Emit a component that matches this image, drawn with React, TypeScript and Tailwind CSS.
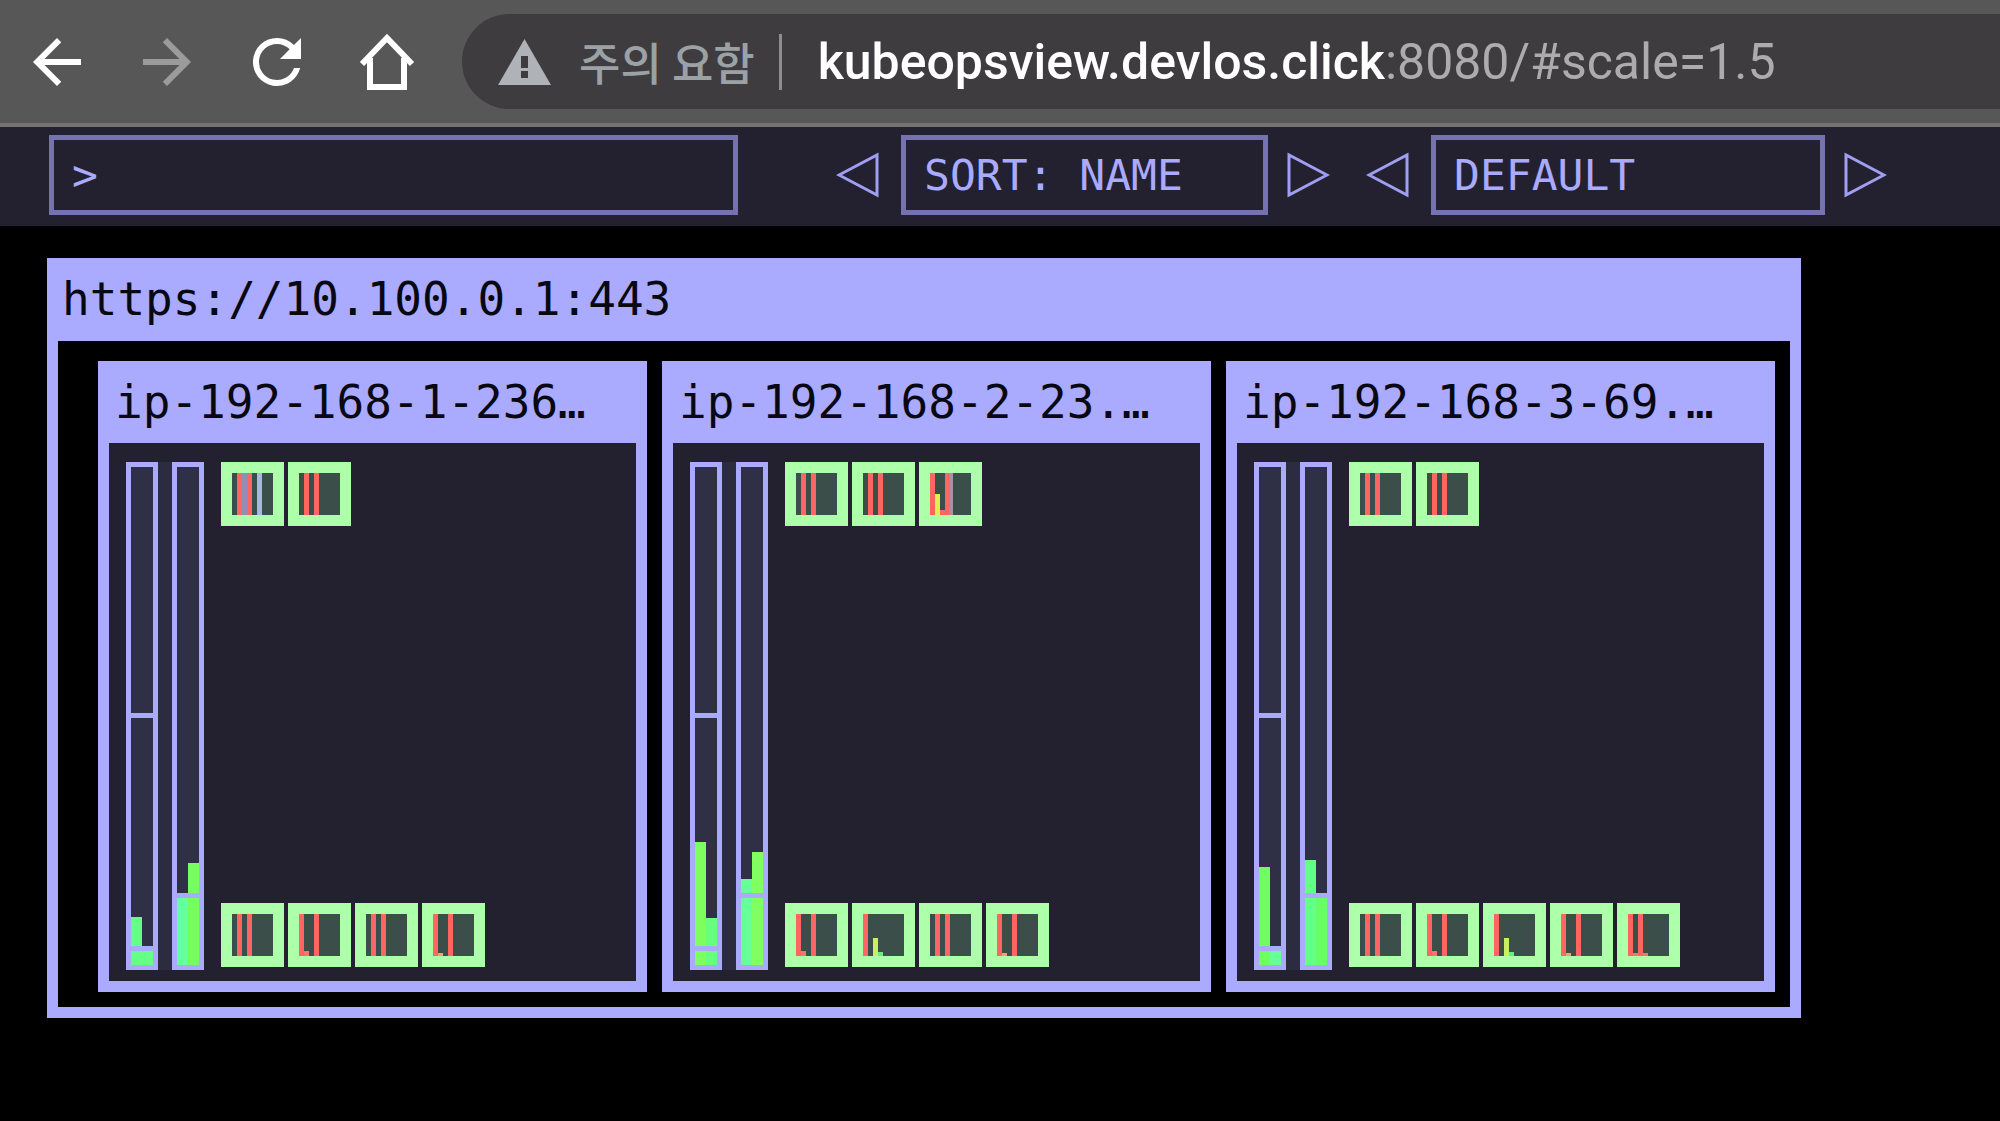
import type { ReactNode } from "react";

interface Stripe {
  col: number;
  height: number;
  color: string;
  width?: number;
}

interface GaugeData {
  label: string;
  columns: { top: number; color: string }[];
  marks: number[];
}

interface NodeData {
  name: string;
  gauges: GaugeData[];
  pods: Stripe[][];
  systemPods: Stripe[][];
}

const RED = "#ff6663";
const GAUGE_HEIGHT = 508;
const POD_INNER = 42;

const full = (col: number): Stripe => ({ col, height: POD_INNER, color: RED });

const IDLE: Stripe[] = [full(1), full(3)];
const LOW: Stripe[] = [full(0), { col: 1, height: 5, color: "#ff7468" }, full(3)];
const LOWER: Stripe[] = [full(0), { col: 1, height: 3, color: "#f8a070" }, full(3)];
const MEMORY: Stripe[] = [
  full(0),
  { col: 2, height: 18, color: "#c8f060" },
  { col: 3, height: 4, color: "#66ee80" },
];
const BUSY: Stripe[] = [
  full(1),
  { col: 2, height: POD_INNER, color: "#938fb4" },
  full(3),
  { col: 5, height: POD_INNER, color: "#a5b8e6" },
];
const MIXED: Stripe[] = [
  full(0),
  { col: 1, height: 21, color: "#e2f04e" },
  { col: 2, height: 5, color: RED },
  full(3),
  { col: 4, height: POD_INNER, color: "#a98fa8", width: 3 },
];
const NARROW: Stripe[] = [
  full(0),
  { col: 1, height: 3, color: "#f07868" },
  full(2),
  { col: 3, height: 3, color: "#f07868" },
];

const NODES: NodeData[] = [
  {
    name: "ip-192-168-1-236…",
    gauges: [
      { label: "CPU", columns: [{ top: 455, color: "#66ff85" }, { top: 488, color: "#66ff85" }], marks: [251, 484] },
      { label: "Memory", columns: [{ top: 434, color: "#66ffa0" }, { top: 401, color: "#74ff5e" }], marks: [431] },
    ],
    pods: [BUSY, IDLE],
    systemPods: [IDLE, LOW, IDLE, LOWER],
  },
  {
    name: "ip-192-168-2-23.…",
    gauges: [
      { label: "CPU", columns: [{ top: 380, color: "#7dff60" }, { top: 456, color: "#66ff80" }], marks: [251, 484] },
      { label: "Memory", columns: [{ top: 417, color: "#66ff98" }, { top: 390, color: "#82ff60" }], marks: [431] },
    ],
    pods: [IDLE, IDLE, MIXED],
    systemPods: [LOW, MEMORY, IDLE, LOWER],
  },
  {
    name: "ip-192-168-3-69.…",
    gauges: [
      { label: "CPU", columns: [{ top: 405, color: "#70ff60" }, { top: 488, color: "#66ff98" }], marks: [251, 484] },
      { label: "Memory", columns: [{ top: 398, color: "#66ff85" }, { top: 434, color: "#66ff66" }], marks: [431] },
    ],
    pods: [IDLE, IDLE],
    systemPods: [IDLE, LOW, MEMORY, LOWER, NARROW],
  },
];

function NavButton({ label, disabled, children }: { label: string; disabled?: boolean; children: ReactNode }) {
  return (
    <button
      type="button"
      aria-label={label}
      disabled={disabled}
      className="size-[72px] shrink-0 text-white disabled:text-[#9b9b9b]"
    >
      <svg viewBox="0 0 72 72" className="size-full" fill="currentColor">
        {children}
      </svg>
    </button>
  );
}

function BrowserBar() {
  return (
    <header className="flex h-[127px] items-center border-b-4 border-[#777371] bg-[#575757] pl-[21px]">
      <nav className="flex shrink-0 items-center gap-[38px]">
        <NavButton label="Back">
          <path transform="scale(3)" d="M20 11H7.83l5.59-5.59L12 4l-8 8 8 8 1.41-1.41L7.83 13H20v-2z" />
        </NavButton>
        <NavButton label="Forward" disabled>
          <path transform="scale(3)" d="M12 4l-1.41 1.41L16.17 11H4v2h12.17l-5.58 5.59L12 20l8-8z" />
        </NavButton>
        <NavButton label="Reload">
          <path
            transform="scale(3)"
            d="M17.65 6.35A7.96 7.96 0 0 0 12 4a8 8 0 1 0 7.73 10h-2.08A6 6 0 1 1 12 6c1.66 0 3.14.69 4.22 1.78L13 11h7V4l-2.35 2.35z"
          />
        </NavButton>
        <NavButton label="Home">
          <path
            d="M11 38 36 12 61 38M19 32V61H53V32"
            fill="none"
            stroke="currentColor"
            strokeWidth="6"
          />
        </NavButton>
      </nav>
      <div className="ml-[39px] flex h-[95px] min-w-0 flex-1 items-center rounded-l-full bg-[#3f3c40] pl-9">
        <svg viewBox="0 0 53 46" className="h-[46px] w-[53px] shrink-0" fill="#afb3b7">
          <path fillRule="evenodd" d="M26.500 0 53 46H0zM23 17v12h7V17zM23 32v7h7v-7z" />
        </svg>
        <span className="ml-7 shrink-0 font-['Noto_Sans_CJK_KR',sans-serif] text-[45px] leading-[56px] font-medium text-[#9ba1a5]">
          주의 요함
        </span>
        <span className="ml-6 h-14 w-[3px] shrink-0 bg-[#8e8e90]" />
        <span className="ml-9 font-[Roboto,sans-serif] text-[50px] leading-[60px] whitespace-nowrap text-[#acacac]">
          <span className="font-medium text-white">kubeopsview.devlos.click</span>:8080/#scale=1.5
        </span>
      </div>
    </header>
  );
}

function ArrowButton({ label, flip }: { label: string; flip?: boolean }) {
  return (
    <button type="button" aria-label={label} className="h-12 w-11 shrink-0">
      <svg viewBox="0 0 44 48" className="size-full" fill="none" stroke="#a09ef0" strokeWidth="3">
        <path d={flip ? "M3 4V44L41 24z" : "M41 4V44L3 24z"} />
      </svg>
    </button>
  );
}

function Toolbar() {
  return (
    <div className="flex h-[99px] items-start bg-[#232130] pt-2 pl-[49px] text-[43px] leading-[70px] text-[#aaaaff]">
      <label className="flex h-20 w-[689px] border-5 border-[#7572b0] pl-[18px]">
        <span>&gt;</span>
        <input type="text" aria-label="Search" className="min-w-0 flex-1 outline-none" />
      </label>
      <div className="ml-[98px] flex h-20 items-center">
        <ArrowButton label="Previous sort order" />
        <output className="mr-[18px] ml-[21px] h-20 w-[367px] border-5 border-[#7572b0] pl-[18px] whitespace-pre">SORT: NAME</output>
        <ArrowButton label="Next sort order" flip />
      </div>
      <div className="ml-9 flex h-20 items-center">
        <ArrowButton label="Previous theme" />
        <output className="mr-[18px] ml-[21px] h-20 w-[394px] border-5 border-[#7572b0] pl-[18px]">DEFAULT</output>
        <ArrowButton label="Next theme" flip />
      </div>
    </div>
  );
}

function Gauge({ label, columns, marks }: GaugeData) {
  return (
    <svg role="img" aria-label={label} viewBox="0 0 32 508" className="h-[508px] w-8 bg-[#2f2f45]">
      {columns.map((c, i) => (
        <rect key={i} x={5 + i * 11} y={c.top} width={11} height={GAUGE_HEIGHT - c.top} fill={c.color} />
      ))}
      {marks.map((y) => (
        <rect key={y} x={5} y={y} width={22} height={5} fill="#aaaaff" />
      ))}
      <rect x={2.5} y={2.5} width={27} height={503} fill="none" stroke="#aaaaff" strokeWidth={5} />
    </svg>
  );
}

function Pod({ stripes }: { stripes: Stripe[] }) {
  return (
    <svg viewBox="0 0 63 64" className="h-16 w-[63px] shrink-0">
      <rect width={63} height={64} fill="#adffa9" />
      <rect x={11} y={11} width={41} height={POD_INNER} fill="#3c4e4a" />
      {stripes.map((s, i) => (
        <rect key={i} x={11 + s.col * 5} y={53 - s.height} width={s.width ?? 5} height={s.height} fill={s.color} />
      ))}
    </svg>
  );
}

function PodRow({ pods }: { pods: Stripe[][] }) {
  return (
    <div className="flex gap-1">
      {pods.map((stripes, i) => (
        <Pod key={i} stripes={stripes} />
      ))}
    </div>
  );
}

function NodeCard({ node }: { node: NodeData }) {
  return (
    <article className="w-[549px] bg-[#aaaaff] px-[11px] pb-[11px]">
      <h2 className="pl-[6px] leading-[82px]">{node.name}</h2>
      <div className="flex bg-[#232130] pt-[19px] pr-4 pb-[11px] pl-[17px]">
        <div className="flex gap-[14px] bg-[#2c2c40]">
          {node.gauges.map((g) => (
            <Gauge key={g.label} {...g} />
          ))}
        </div>
        <div className="ml-[17px] flex flex-col justify-between pb-[3px]">
          <PodRow pods={node.pods} />
          <PodRow pods={node.systemPods} />
        </div>
      </div>
    </article>
  );
}

export default function App() {
  return (
    <div className="min-h-screen overflow-hidden bg-black font-['DejaVu_Sans_Mono',monospace]">
      <BrowserBar />
      <Toolbar />
      <main className="px-[47px] pt-8 pb-12">
        <section className="w-fit bg-[#aaaaff] px-[11px] pb-[11px] text-[46px] text-[#080812]">
          <h1 className="pl-1 leading-[83px]">https://10.100.0.1:443</h1>
          <div className="flex gap-[15px] bg-black pt-5 pr-[15px] pb-[15px] pl-10">
            {NODES.map((node) => (
              <NodeCard key={node.name} node={node} />
            ))}
          </div>
        </section>
      </main>
    </div>
  );
}
